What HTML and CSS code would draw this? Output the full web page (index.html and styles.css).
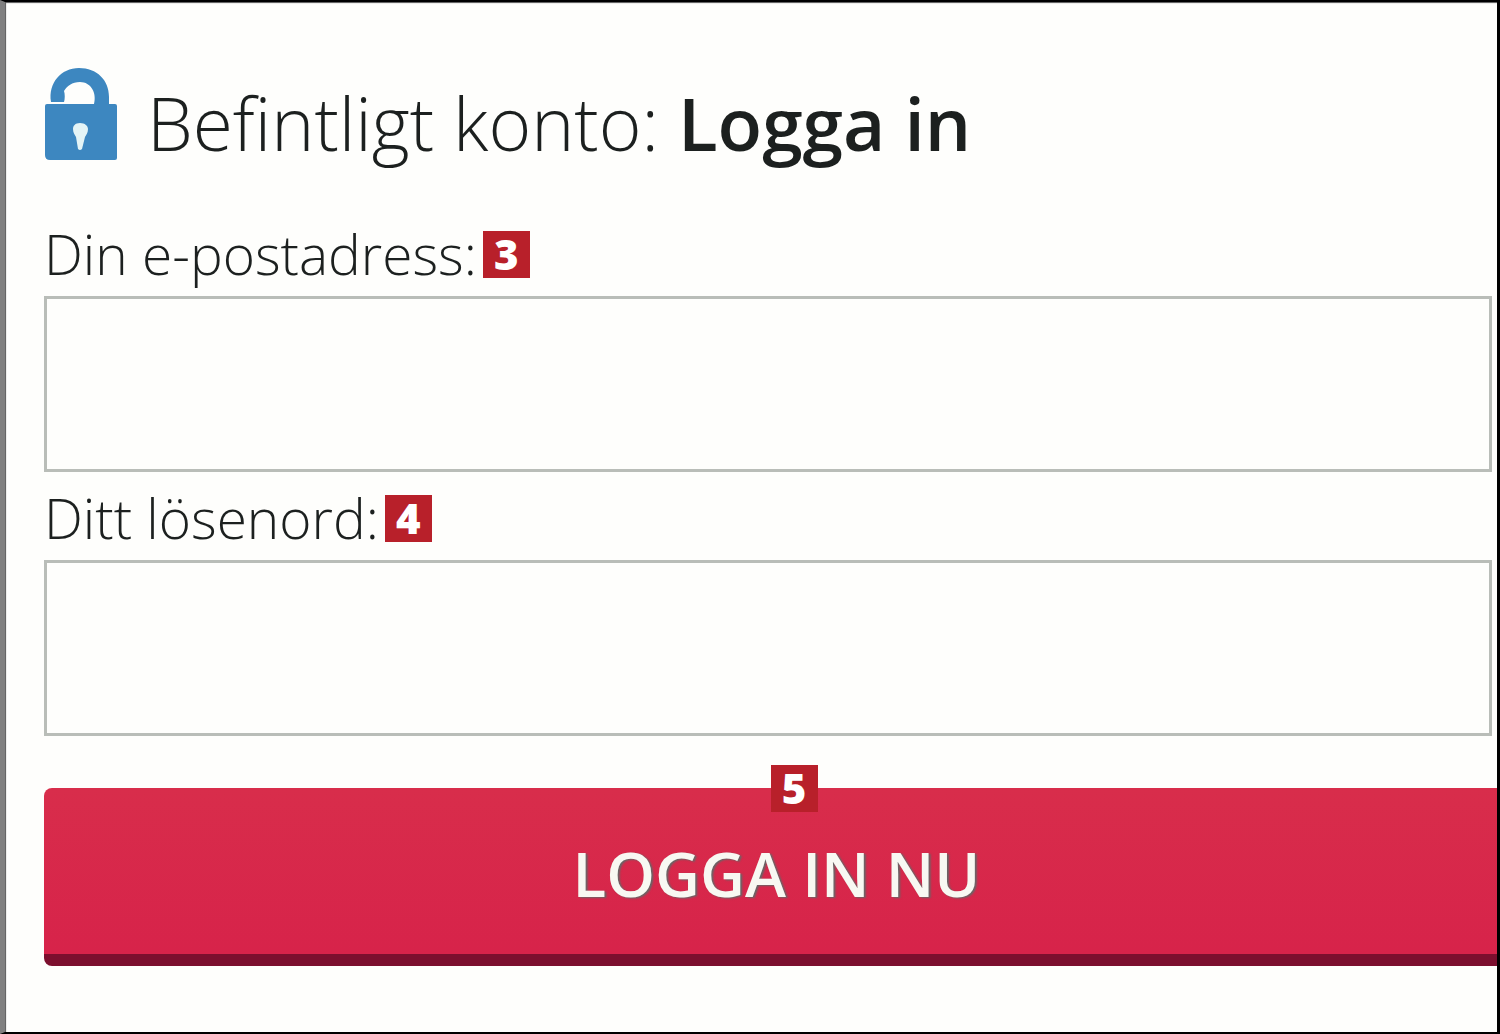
FILE: index.html
```html
<!DOCTYPE html>
<html lang="sv">
<head>
<meta charset="utf-8">
<meta name="viewport" content="width=device-width, initial-scale=1">
<title>Logga in</title>
<link rel="stylesheet" href="styles.css">
</head>
<body>
<main class="panel">
  <header class="heading">
    <svg class="lock" viewBox="0 0 74 92" aria-hidden="true">
      <path class="lock-shape" d="M3 36H50C53 25 47 14 36 14c-8 0-13 4-16 9 1 3 1 8 0 11H7C4 15 17 0 35 0c18 0 30 12 30 29v7h6q2 0 2 2v52q0 2-2 2H6q-5 0-5-5V38q0-2 2-2z"/>
      <path class="lock-hole" d="M36 55c-5 0-7 3-7 6 0 4 2 6 3 8l2 12q2 2 4 0l3-12c1-2 3-4 3-8 0-3-3-6-8-6z"/>
    </svg>
    <h1 class="title">Befintligt konto: <strong class="title-strong">Logga in</strong></h1>
  </header>
  <form class="form">
    <div class="field">
      <div class="label-row">
        <label class="label" for="email">Din e-postadress:</label>
        <span class="badge">3</span>
      </div>
      <input class="input" id="email" type="email">
    </div>
    <div class="field">
      <div class="label-row">
        <label class="label" for="password">Ditt lösenord:</label>
        <span class="badge">4</span>
      </div>
      <input class="input" id="password" type="password">
    </div>
    <div class="submit">
      <button class="button" type="submit">LOGGA IN NU</button>
      <span class="badge badge-over">5</span>
    </div>
  </form>
</main>
</body>
</html>
```
FILE: styles.css
```css
* {
  box-sizing: border-box;
}

body {
  margin: 0;
  background: #fefefc;
  color: #1c201f;
  font-family: "Open Sans", "Noto Sans", sans-serif;
}

.panel {
  min-height: 100vh;
  padding: 66px 5px 64px 39px;
  border-style: solid;
  border-color: #000 #000 #000 #808080;
  border-width: 2px 3px 2px 5px;
  box-shadow: inset 1px 1px 1px #555;
}

.heading {
  display: flex;
  align-items: flex-start;
  gap: 29px;
  height: 160px;
}

.lock {
  width: 74px;
  height: 92px;
  flex: none;
}

.lock-shape {
  fill: #3d87c0;
}

.lock-hole {
  fill: #e4f4f6;
}

.title {
  margin: 7px 0 0;
  font-size: 73px;
  line-height: 96px;
  font-weight: 300;
  white-space: nowrap;
}

.title-strong {
  font-weight: 600;
}

.label-row {
  display: flex;
  align-items: center;
  gap: 6px;
  height: 68px;
  padding-bottom: 16px;
}

.label {
  font-size: 55px;
  line-height: 56px;
  font-weight: 300;
}

.badge {
  width: 47px;
  height: 47px;
  background: #b8202a;
  color: #fff;
  font-size: 42px;
  line-height: 46px;
  font-weight: 800;
  text-align: center;
}

.input {
  display: block;
  width: 100%;
  height: 176px;
  padding: 0 24px;
  border: 3px solid #b9bdb8;
  background: #fefefc;
  color: inherit;
  font: inherit;
  font-size: 55px;
}

.field {
  margin-bottom: 20px;
}

.submit {
  position: relative;
  margin: 52px -5px 0 0;
}

.button {
  display: block;
  width: 100%;
  height: 178px;
  padding: 4px 0 0 12px;
  border: 0;
  border-bottom: 12px solid #7c0f2e;
  border-radius: 8px 0 0 8px;
  background: linear-gradient(#d82d4b, #d7234a);
  color: #f8f8f2;
  font-family: inherit;
  font-size: 62px;
  font-weight: 600;
  text-shadow: 2px 1px 2px #666;
}

.badge-over {
  position: absolute;
  top: -23px;
  left: 50%;
}
```
